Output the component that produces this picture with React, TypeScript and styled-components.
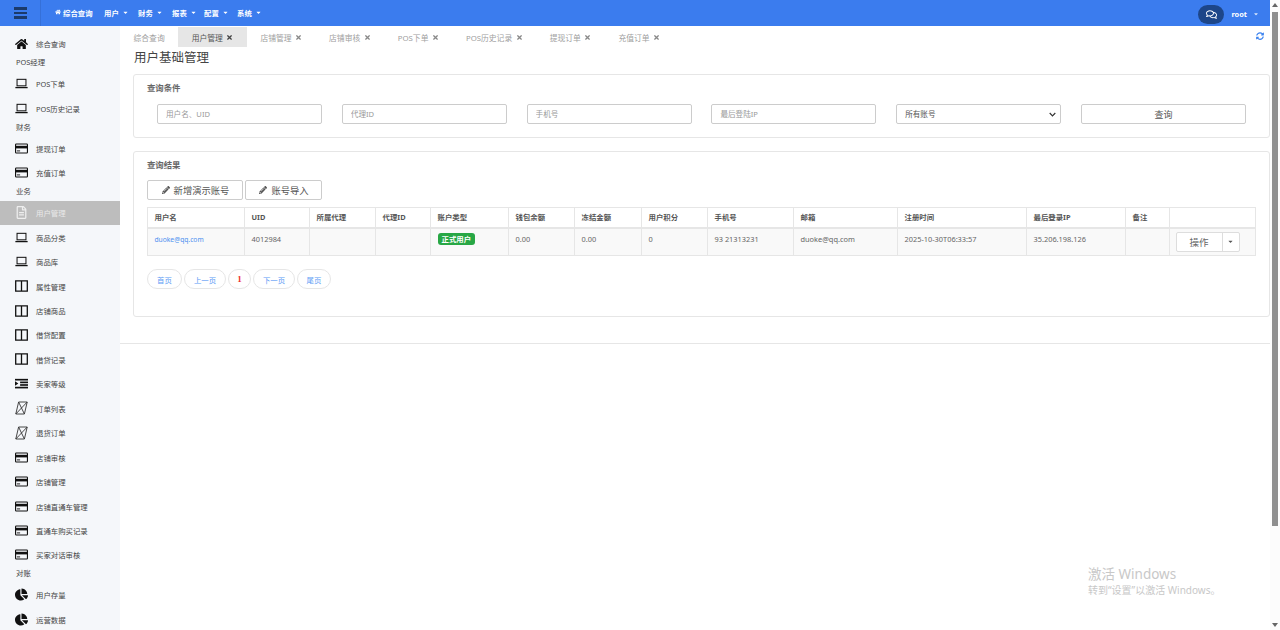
import styled, { createGlobalStyle } from 'styled-components'
import { FaHome, FaChartPie, FaTimes, FaPencilAlt, FaSyncAlt, FaRegComments, FaCaretDown, FaRegFileAlt } from 'react-icons/fa'

const GlobalStyle = createGlobalStyle`
  html, body {
    margin: 0;
    height: 100%;
    overflow: hidden;
    background: #fff;
    font-family: "Noto Sans", "Noto Sans CJK SC", sans-serif;
    font-size: 7.4px;
    color: #555;
  }
  * { box-sizing: border-box; }
`

const Page = styled.div`
  display: flex;
  height: 630px;
  position: relative;
`

const Shell = styled.div`
  flex: 1;
  min-width: 0;
  display: flex;
  flex-direction: column;
`

const Header = styled.header`
  height: 26px;
  flex: none;
  display: flex;
  align-items: center;
  background: #3b7cee;
  color: #fff;
`

const MenuToggle = styled.div`
  width: 41px;
  height: 100%;
  flex: none;
  display: flex;
  flex-direction: column;
  justify-content: center;
  gap: 2px;
  padding: 0 13px 0 14px;
  border-right: 1px solid #3570d8;

  span {
    height: 2.5px;
    background: #1b3a6b;
  }
`

const Nav = styled.nav`
  display: flex;
  align-items: center;
  padding: 0 0 2px 14px;
  font-weight: 700;
`

const NavItem = styled.div<{ $w: number }>`
  display: flex;
  align-items: center;
  gap: 3px;
  width: ${p => p.$w}px;
  svg { flex: none; }
`

const HeaderRight = styled.div`
  margin-left: auto;
  display: flex;
  align-items: center;
  padding: 2px 11px 0 0;
  font-weight: 700;
`

const ChatPill = styled.div`
  width: 26px;
  height: 19px;
  border-radius: 10px;
  background: #1d4689;
  display: flex;
  align-items: center;
  justify-content: center;
  margin-right: 7px;
`

const RootCaret = styled.span`
  margin-left: 6px;
  display: flex;
  opacity: 0.8;
`

const Body = styled.div`
  flex: 1;
  display: flex;
  min-height: 0;
`

const Sidebar = styled.aside`
  width: 120px;
  flex: none;
  background: #f5f7fa;
  overflow: hidden;
  padding-top: 5.6px;
`

const SideItem = styled.div<{ $active?: boolean }>`
  height: 24.45px;
  display: flex;
  align-items: center;
  padding-left: 15px;
  gap: 8px;
  color: ${p => (p.$active ? '#e9e9e9' : '#444')};
  background: ${p => (p.$active ? '#bdbdbd' : 'transparent')};
`

const IconSlot = styled.span<{ $active?: boolean }>`
  width: 13px;
  height: 13px;
  flex: none;
  display: flex;
  align-items: center;
  justify-content: center;
  color: ${p => (p.$active ? '#eee' : '#111')};
`

const SideGroup = styled.div`
  height: 15.6px;
  padding-left: 16px;
  line-height: 13px;
  color: #444;
`

const Main = styled.main`
  flex: 1;
  min-width: 0;
  display: flex;
  flex-direction: column;
`

const Tabs = styled.div`
  display: flex;
  height: 21px;
  padding-top: 1px;
  position: relative;
  flex: none;
`

const Tab = styled.div<{ $active?: boolean }>`
  height: 19.5px;
  display: flex;
  align-items: center;
  gap: 3.5px;
  padding: 1px 13.5px 0;
  font-size: 7.8px;
  color: ${p => (p.$active ? '#555' : '#a0a0a0')};
  background: ${p => (p.$active ? '#e6e6e6' : 'transparent')};
  svg { color: ${p => (p.$active ? '#444' : '#888')}; }
`

const Refresh = styled.span`
  position: absolute;
  right: 6px;
  top: 6px;
  display: flex;
  color: #3b82f0;
`

const Content = styled.div`
  padding: 0 0 26px 13px;
  border-bottom: 1px solid #e6e6e6;
`

const Title = styled.h1`
  margin: 0;
  height: 27px;
  padding-left: 1px;
  font-size: 12.5px;
  font-weight: 400;
  line-height: 21px;
  color: #444;
`

const Card = styled.section<{ $h: number }>`
  height: ${p => p.$h}px;
  border: 1px solid #e6e6e6;
  border-radius: 3px;
  padding: 7px 13px;
  background: #fff;
  & + & { margin-top: 13px; }
`

const CardTitle = styled.div`
  font-size: 8.4px;
  font-weight: 700;
  color: #666;
  line-height: 11px;
  height: 11px;
`

const FilterRow = styled.div`
  display: grid;
  grid-template-columns: repeat(6, 165px);
  column-gap: 19.8px;
  margin: 11px 0 0 10px;
`

const FilterInput = styled.input`
  height: 20px;
  border: 1px solid #ccc;
  border-radius: 2px;
  padding: 0 8px;
  font: inherit;
  font-size: 7.6px;
  color: #555;
  background: #fff;
  outline: none;
  width: 100%;

  &::placeholder { color: #999; }
`

const FilterSelect = styled.select`
  height: 20px;
  border: 1px solid #ccc;
  border-radius: 2px;
  padding: 0 8px;
  font: inherit;
  font-size: 7.6px;
  color: #555;
  width: 100%;
  appearance: none;
  background: #fff url("data:image/svg+xml,%3Csvg xmlns='http://www.w3.org/2000/svg' width='7' height='5' viewBox='0 0 7 5'%3E%3Cpath d='M.7 1l2.8 2.8L6.3 1' fill='none' stroke='%23333' stroke-width='1.2'/%3E%3C/svg%3E") no-repeat right 4px center;
`

const SearchButton = styled.button`
  height: 20px;
  border: 1px solid #ccc;
  border-radius: 2px;
  background: #fff;
  color: #555;
  font-family: inherit;
  font-size: 9px;
  padding: 0;
`

const Actions = styled.div`
  display: flex;
  gap: 2px;
  margin-top: 10px;
`

const ActionButton = styled.button<{ $w: number }>`
  width: ${p => p.$w}px;
  height: 20px;
  border: 1px solid #ccc;
  border-radius: 2px;
  background: #fff;
  color: #555;
  font-family: inherit;
  font-size: 9.3px;
  padding: 0 0 0 1px;
  display: flex;
  align-items: center;
  justify-content: center;
  gap: 4px;
`

const Table = styled.table`
  width: 1108px;
  table-layout: fixed;
  border-collapse: collapse;
  margin-top: 7px;
`

const Th = styled.th`
  height: 20px;
  padding: 0 6.5px 1px;
  text-align: left;
  font-weight: 700;
  color: #555;
  border: 1px solid #e6e6e6;
  border-bottom-width: 2px;
`

const Td = styled.td`
  height: 28px;
  padding: 0 6.5px 6px;
  background: #f9f9f9;
  color: #666;
  border: 1px solid #e6e6e6;
  white-space: nowrap;
`

const UserLink = styled.a`
  font-size: 6.7px;
  color: #4d90f0;
`

const Badge = styled.span`
  display: inline-block;
  height: 12px;
  line-height: 12px;
  padding: 0 4px;
  border-radius: 3px;
  background: #28a745;
  color: #fff;
  font-weight: 700;
`

const SplitButton = styled.div`
  display: flex;
  height: 20px;
  width: 64px;
  margin-left: -1px;
  border: 1px solid #ddd;
  border-radius: 2px;
  background: #fff;
  font-size: 9.5px;
  color: #666;
  position: relative;
  top: 3px;
`

const SplitLabel = styled.span`
  flex: 1;
  display: flex;
  align-items: center;
  justify-content: center;
  border-right: 1px solid #ddd;
`

const SplitCaret = styled.span`
  width: 16px;
  display: flex;
  align-items: center;
  justify-content: center;
  color: #555;
`

const Pager = styled.div`
  display: flex;
  gap: 2px;
  margin-top: 13px;
`

const PageLink = styled.span<{ $w: number; $current?: boolean }>`
  width: ${p => p.$w}px;
  height: 20px;
  border: 1px solid #e6e6e6;
  border-radius: 10px;
  display: flex;
  align-items: center;
  justify-content: center;
  color: ${p => (p.$current ? '#ee3330' : '#5b9bf5')};
  font-family: ${p => (p.$current ? '"Liberation Serif", serif' : 'inherit')};
  font-size: ${p => (p.$current ? '9px' : 'inherit')};
  font-weight: ${p => (p.$current ? 700 : 400)};
`

const ScrollBar = styled.div`
  width: 10px;
  flex: none;
  background: #fcfcfc;
  display: flex;
  flex-direction: column;
  align-items: center;
  justify-content: space-between;
  padding: 3px 0;
  position: relative;
`

const ScrollArrow = styled.span<{ $down?: boolean }>`
  width: 0;
  height: 0;
  border-left: 3px solid transparent;
  border-right: 3px solid transparent;
  border-bottom: ${p => (p.$down ? '0' : '4px solid #666')};
  border-top: ${p => (p.$down ? '4px solid #666' : '0')};
`

const ScrollThumb = styled.span`
  position: absolute;
  top: 12px;
  left: 2px;
  width: 6px;
  height: 514px;
  background: #8f8f8f;
`

const Watermark = styled.div`
  position: absolute;
  left: 1088px;
  top: 566px;
  color: #c8c8c8;
  font-size: 10px;
  line-height: 15px;
  pointer-events: none;

  strong {
    display: block;
    font-weight: 400;
    font-size: 13.5px;
    line-height: 17px;
  }
`

const Laptop = () => (
  <svg width="14" height="11" viewBox="0 0 14 11">
    <rect x="2.2" y="1" width="9.6" height="7" fill="none" stroke="currentColor" strokeWidth="1.1" />
    <rect x="0.4" y="9.2" width="13.2" height="1.4" fill="currentColor" />
  </svg>
)

const CreditCard = () => (
  <svg width="14" height="11" viewBox="0 0 14 11">
    <rect x="0.6" y="0.6" width="12.8" height="9.8" rx="0.8" fill="none" stroke="currentColor" strokeWidth="1.2" />
    <rect x="1" y="2.6" width="12" height="2.8" fill="currentColor" />
    <rect x="2" y="7.6" width="3.5" height="1" fill="currentColor" />
  </svg>
)

const Columns = () => (
  <svg width="13" height="12" viewBox="0 0 13 12">
    <path d="M.7.9h11.6v10.2H.7zM6.5.9v10.2" fill="none" stroke="currentColor" strokeWidth="1.3" />
  </svg>
)

const Indent = () => (
  <svg width="14" height="11" viewBox="0 0 14 11">
    <rect x="0" y="0.5" width="14" height="1.8" fill="currentColor" />
    <rect x="5.5" y="3.4" width="8.5" height="1.8" fill="currentColor" />
    <rect x="5.5" y="6.2" width="8.5" height="1.8" fill="currentColor" />
    <rect x="0" y="9" width="14" height="1.8" fill="currentColor" />
    <path d="M0 3.2l3.6 2.3L0 7.8z" fill="currentColor" />
  </svg>
)

const Skew = () => (
  <svg width="13" height="14" viewBox="0 0 13 14">
    <path d="M3.6 1h8.6L9.4 13H.8zM3.6 1l5.8 12M12.2 1L.8 13" fill="none" stroke="#333" strokeWidth="0.9" />
  </svg>
)

const Pie = () => <FaChartPie size={13} />

type Entry = { group: string } | { label: string; icon: React.ReactNode; active?: boolean }

const sideEntries: Entry[] = [
  { label: '综合查询', icon: <FaHome size={14} /> },
  { group: 'POS经理' },
  { label: 'POS下单', icon: <Laptop /> },
  { label: 'POS历史记录', icon: <Laptop /> },
  { group: '财务' },
  { label: '提现订单', icon: <CreditCard /> },
  { label: '充值订单', icon: <CreditCard /> },
  { group: '业务' },
  { label: '用户管理', icon: <FaRegFileAlt size={13} />, active: true },
  { label: '商品分类', icon: <Laptop /> },
  { label: '商品库', icon: <Laptop /> },
  { label: '属性管理', icon: <Columns /> },
  { label: '店铺商品', icon: <Columns /> },
  { label: '借贷配置', icon: <Columns /> },
  { label: '借贷记录', icon: <Columns /> },
  { label: '卖家等级', icon: <Indent /> },
  { label: '订单列表', icon: <Skew /> },
  { label: '退货订单', icon: <Skew /> },
  { label: '店铺审核', icon: <CreditCard /> },
  { label: '店铺管理', icon: <CreditCard /> },
  { label: '店铺直通车管理', icon: <CreditCard /> },
  { label: '直通车购买记录', icon: <CreditCard /> },
  { label: '买家对话审核', icon: <CreditCard /> },
  { group: '对账' },
  { label: '用户存量', icon: <Pie /> },
  { label: '运营数据', icon: <Pie /> },
]

const tabs = ['用户管理', '店铺管理', '店铺审核', 'POS下单', 'POS历史记录', '提现订单', '充值订单']

const columns: [string, number][] = [
  ['用户名', 97], ['UID', 65], ['所属代理', 66], ['代理ID', 55], ['账户类型', 78], ['钱包余额', 66], ['冻结金额', 67],
  ['用户积分', 66], ['手机号', 86], ['邮箱', 104], ['注册时间', 129], ['最后登录IP', 99], ['备注', 44], ['', 86],
]

const pages: [string, number, boolean?][] = [['首页', 35], ['上一页', 42], ['1', 23, true], ['下一页', 42], ['尾页', 34]]

const navItems: [string, number][] = [['用户', 34], ['财务', 34], ['报表', 32], ['配置', 33], ['系统', 30]]

export default function App() {
  return (
    <Page>
      <GlobalStyle />
      <Shell>
        <Header>
          <MenuToggle><span /><span /><span /></MenuToggle>
          <Nav>
            <NavItem $w={49}><FaHome size={6} style={{ marginRight: -1 }} />综合查询</NavItem>
            {navItems.map(([label, w]) => (
              <NavItem key={label} $w={w}>{label}<FaCaretDown size={7} /></NavItem>
            ))}
          </Nav>
          <HeaderRight>
            <ChatPill><FaRegComments size={11} /></ChatPill>
            root
            <RootCaret><FaCaretDown size={6} /></RootCaret>
          </HeaderRight>
        </Header>
        <Body>
          <Sidebar>
            {sideEntries.map(entry =>
              'group' in entry ? (
                <SideGroup key={entry.group}>{entry.group}</SideGroup>
              ) : (
                <SideItem key={entry.label} $active={entry.active}>
                  <IconSlot $active={entry.active}>{entry.icon}</IconSlot>
                  {entry.label}
                </SideItem>
              )
            )}
          </Sidebar>
          <Main>
            <Tabs>
              <Tab>综合查询</Tab>
              {tabs.map((t, i) => (
                <Tab key={t} $active={i === 0}>{t}<FaTimes size={7} /></Tab>
              ))}
              <Refresh><FaSyncAlt size={8} /></Refresh>
            </Tabs>
            <Content>
              <Title>用户基础管理</Title>
              <Card $h={64}>
                <CardTitle>查询条件</CardTitle>
                <FilterRow>
                  <FilterInput placeholder="用户名、UID" />
                  <FilterInput placeholder="代理ID" />
                  <FilterInput placeholder="手机号" />
                  <FilterInput placeholder="最后登陆IP" />
                  <FilterSelect defaultValue="all"><option value="all">所有账号</option></FilterSelect>
                  <SearchButton>查询</SearchButton>
                </FilterRow>
              </Card>
              <Card $h={166}>
                <CardTitle>查询结果</CardTitle>
                <Actions>
                  <ActionButton $w={96}><FaPencilAlt size={8} />新增演示账号</ActionButton>
                  <ActionButton $w={77}><FaPencilAlt size={8} />账号导入</ActionButton>
                </Actions>
                <Table>
                  <colgroup>
                    {columns.map(([, w], i) => <col key={i} style={{ width: w }} />)}
                  </colgroup>
                  <thead>
                    <tr>{columns.map(([name], i) => <Th key={i}>{name}</Th>)}</tr>
                  </thead>
                  <tbody>
                    <tr>
                      <Td><UserLink>duoke@qq.com</UserLink></Td>
                      <Td>4012984</Td>
                      <Td />
                      <Td />
                      <Td><Badge>正式用户</Badge></Td>
                      <Td>0.00</Td>
                      <Td>0.00</Td>
                      <Td>0</Td>
                      <Td>93 21313231</Td>
                      <Td>duoke@qq.com</Td>
                      <Td>2025-10-30T06:33:57</Td>
                      <Td>35.206.198.126</Td>
                      <Td />
                      <Td>
                        <SplitButton>
                          <SplitLabel>操作</SplitLabel>
                          <SplitCaret><FaCaretDown size={7} /></SplitCaret>
                        </SplitButton>
                      </Td>
                    </tr>
                  </tbody>
                </Table>
                <Pager>
                  {pages.map(([label, w, current]) => (
                    <PageLink key={label} $w={w} $current={current}>{label}</PageLink>
                  ))}
                </Pager>
              </Card>
            </Content>
          </Main>
        </Body>
      </Shell>
      <ScrollBar>
        <ScrollArrow />
        <ScrollThumb />
        <ScrollArrow $down />
      </ScrollBar>
      <Watermark>
        <strong>激活 Windows</strong>
        转到“设置”以激活 Windows。
      </Watermark>
    </Page>
  )
}
